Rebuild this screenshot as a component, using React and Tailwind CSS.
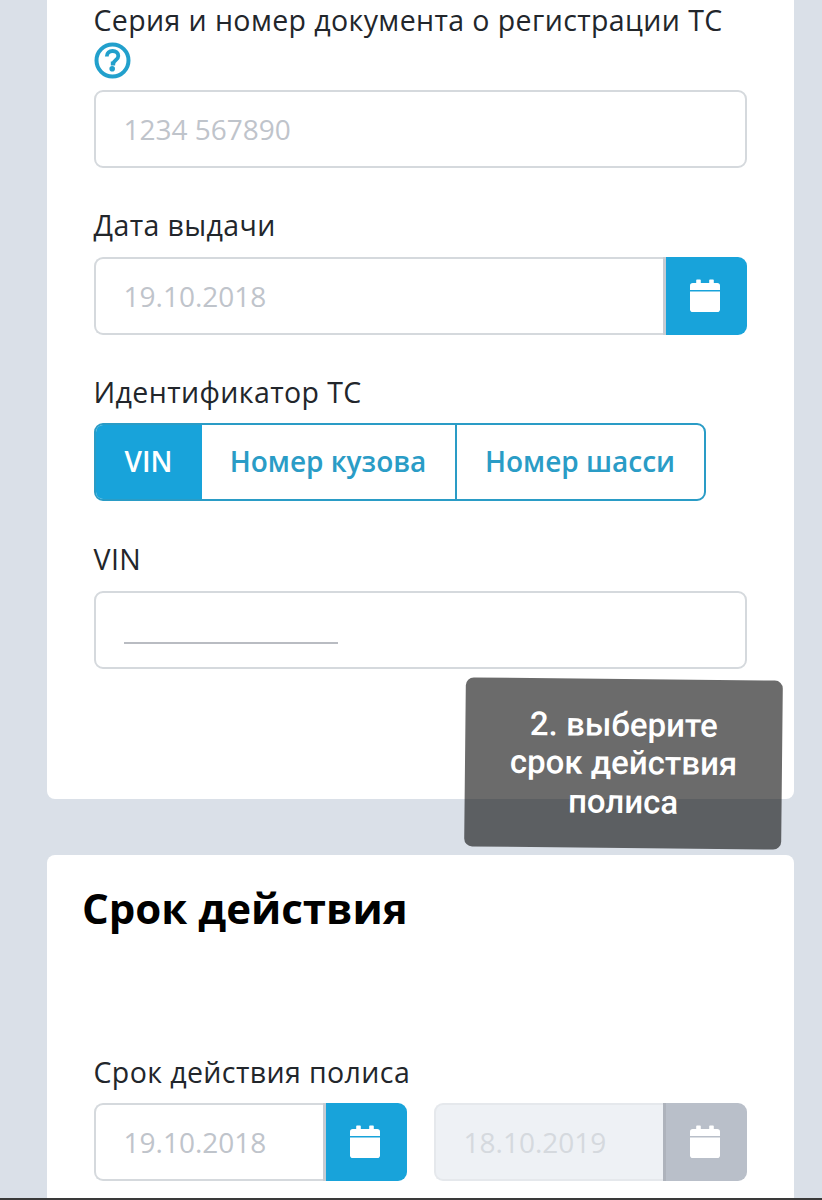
const Cal = () => (
  <svg width="30" height="34" viewBox="0 0 30 34" className="block">
    <path fill="#fff" d="M7 1.500h3a.8.8 0 0 1 .8.8V5h8.400V2.300a.8.8 0 0 1 .8-.8h3a.8.8 0 0 1 .8.8V5h3.400A2.800 2.800 0 0 1 30 7.800V12H0V7.800A2.800 2.800 0 0 1 2.800 5h3.400V2.300a.8.8 0 0 1 .8-.8z" />
    <path fill="#fff" d="M0 13.500h30v17.700a2.800 2.800 0 0 1-2.800 2.800H2.800A2.800 2.800 0 0 1 0 31.200z" />
  </svg>
);

const Label = ({ children, className = "" }) => (
  <div className={`text-[28.500px] font-medium leading-[40px] tracking-[0.4px] text-[#22262b] ${className}`}>{children}</div>
);

const Field = ({ placeholder, children }) => (
  <div className="flex h-[78px] items-center rounded-[9px] border-[2.500px] border-[#d5d9dd] bg-white pb-[1px] pl-[28px] text-[28px] text-[#bfc4cb]">
    {placeholder}
    {children}
  </div>
);

const DateField = ({ value, disabled, className = "" }) => (
  <div className={`flex h-[78px] ${className}`}>
    <div
      className={`flex min-w-0 flex-1 items-center rounded-l-[9px] border-[2.500px] border-r-0 pb-[1px] pl-[28px] text-[28px] ${
        disabled ? "border-[#e5e8ec] bg-[#eef1f5] text-[#d5d9de]" : "border-[#d5d9dd] bg-white text-[#bfc4cb]"
      }`}
    >
      {value}
    </div>
    <div
      className={`flex w-[84px] shrink-0 items-center justify-center rounded-r-[9px] border-l-[3px] pb-[3px] pr-[3px] ${
        disabled ? "border-[#aeb3bc] bg-[#b9bfc9]" : "border-[#c6ccd3] bg-[#18a3da]"
      }`}
    >
      <Cal />
    </div>
  </div>
);

export default function App() {
  return (
    <div
      className="relative h-[1200px] w-[822px] overflow-hidden bg-[#dae0e8] pl-[46.500px]"
      style={{ fontFamily: '"Open Sans", "Noto Sans", sans-serif' }}
    >
      <section className="h-[799px] w-[747.500px] rounded-b-[8px] bg-white px-[47px]">
        <Label>Серия и номер документа о регистрации ТС</Label>
        <div className="mb-[10px] flex h-[40px] items-center">
          <svg width="37" height="37" viewBox="0 0 37 37">
            <circle cx="18.500" cy="18.500" r="16" fill="none" stroke="#22a0cc" strokeWidth="4" />
            <path d="M12.800 14.500c0-3.400 2.500-5.500 5.800-5.500 3.300 0 5.700 1.900 5.700 4.900 0 4-4.500 4-4.900 7.600h-2.600" fill="none" stroke="#22a0cc" strokeWidth="3.800" />
            <circle cx="18.200" cy="26.800" r="2.800" fill="#22a0cc" />
          </svg>
        </div>
        <Field placeholder="1234 567890" />

        <Label className="mt-[37px] mb-[12px]">Дата выдачи</Label>
        <DateField value="19.10.2018" />

        <Label className="mt-[37px] mb-[11px]">Идентификатор ТС</Label>
        <div className="flex h-[78px] w-[612px] overflow-hidden rounded-[9px] border-[2.500px] border-[#2a9cc6] pb-0 text-[28px] font-semibold">
          <div className="flex w-[106px] items-center justify-center bg-[#18a3da] pb-[2px] text-white">VIN</div>
          <div className="flex w-[255px] items-center justify-center border-r-[2.500px] border-[#2a9cc6] pb-[2px] text-[#2a9cc6]">Номер кузова</div>
          <div className="flex flex-1 items-center justify-center pb-[2px] text-[#2a9cc6]">Номер шасси</div>
        </div>

        <Label className="mt-[37.500px] mb-[12px]">VIN</Label>
        <Field>
          <div className="mt-[27px] h-[2px] w-[214px] bg-[#b9bcc2]" />
        </Field>
      </section>

      <section className="mt-[56px] h-[400px] w-[747.500px] rounded-t-[8px] bg-white">
        <h2 className="pl-[35.500px] pt-[23px] text-[42px] font-bold leading-[60px] text-black">Срок действия</h2>
        <div className="px-[47px] pt-[114px]">
          <Label className="mb-[11px]">Срок действия полиса</Label>
          <div className="flex gap-[27px]">
            <DateField value="19.10.2018" className="w-[313px]" />
            <DateField value="18.10.2019" disabled className="w-[313px]" />
          </div>
        </div>
      </section>

      <div
        className="absolute left-[465px] top-[679px] flex h-[169px] w-[317px] rotate-[0.6deg] flex-col items-center justify-center rounded-[8px] bg-[rgba(8,8,8,0.6)] text-center text-[33px] font-medium leading-[38.500px] text-white"
        style={{ fontFamily: 'Roboto, sans-serif' }}
      >
        <div>2. выберите</div>
        <div>срок действия</div>
        <div>полиса</div>
      </div>

      <div className="absolute inset-x-0 bottom-0 h-[2px] bg-[#3a3a3a]" />
    </div>
  );
}
